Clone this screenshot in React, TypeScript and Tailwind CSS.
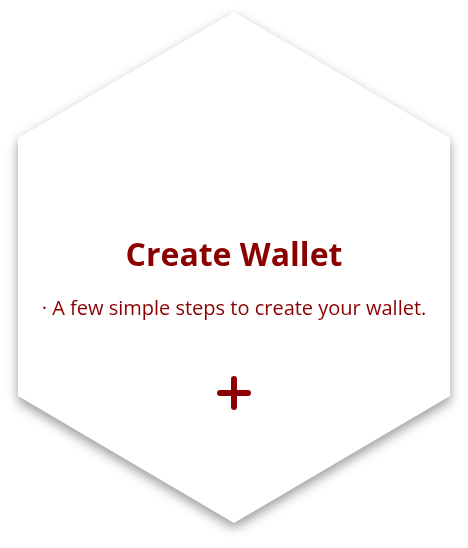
import { Plus } from 'lucide-react';

export default function App() {
  return (
    <div className="min-h-[548px] w-[468px] bg-white pl-[18px] pt-[12px] font-['Open_Sans',sans-serif]">
      <div className="w-[432px] drop-shadow-[0_5px_6px_rgba(0,0,0,0.4)]">
        <div className="flex h-[511px] w-[432px] flex-col items-center bg-white pt-[222px] [clip-path:polygon(50%_0,100%_24.66%,100%_75.15%,50%_100%,0_75.15%,0_24.66%)]">
          <h1 className="text-[32px] font-bold leading-[40px] text-[#8b0000]">
            Create Wallet
          </h1>
          <p className="mt-[21px] whitespace-nowrap text-[20px] leading-[26px] text-[#8b0000]">
            · A few simple steps to create your wallet.
          </p>
          <button className="mt-[48px] text-[#8b0000]">
            <Plus size={48} strokeWidth={3} />
          </button>
        </div>
      </div>
    </div>
  );
}
